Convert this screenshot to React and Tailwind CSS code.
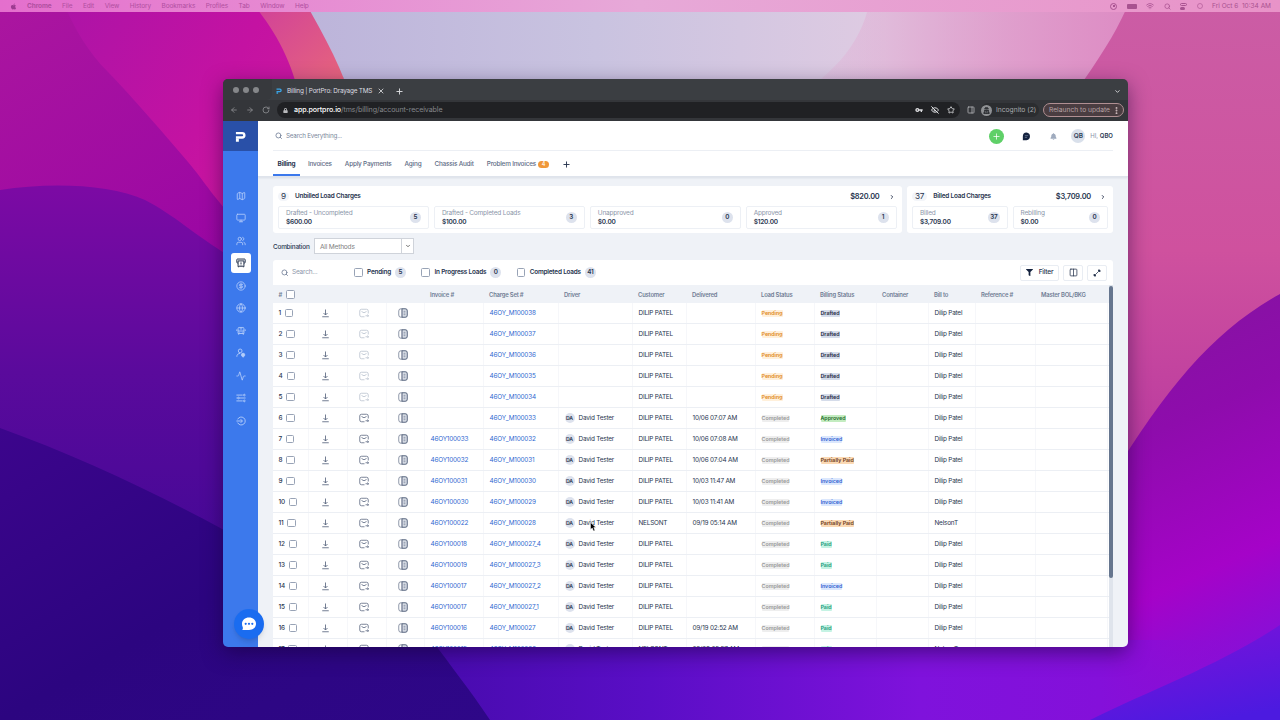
import React from 'react';
import {
    Activity, ArrowLeft, ArrowRight, ChevronDown, ChevronRight, CircleDollarSign, Columns2, EyeOff, Globe,
    Map, Monitor, MoreVertical, PanelRight, Plus, RotateCw, Search, Star, Users, Wifi, X,
} from 'lucide-react';
import { FaApple, FaBell, FaLock, FaUserSecret, FaFilter } from 'react-icons/fa';
import { MdVpnKey } from 'react-icons/md';

const GRID = 'grid grid-cols-[36px_39px_39px_38px_59px_75px_74px_54px_69px_59px_62px_52px_47px_60px_72px]';

const HEADERS = [
    'Invoice #', 'Charge Set #', 'Driver', 'Customer', 'Delivered', 'Load Status', 'Billing Status',
    'Container', 'Bill to', 'Reference #', 'Master BOL/BKG',
];

// [invoice, charge set, customer, delivered, billing status, bill to]
const ROWS = [
    ['', '46OY_M100038', 'DILIP PATEL', '', 'Drafted', 'Dilip Patel'],
    ['', '46OY_M100037', 'DILIP PATEL', '', 'Drafted', 'Dilip Patel'],
    ['', '46OY_M100036', 'DILIP PATEL', '', 'Drafted', 'Dilip Patel'],
    ['', '46OY_M100035', 'DILIP PATEL', '', 'Drafted', 'Dilip Patel'],
    ['', '46OY_M100034', 'DILIP PATEL', '', 'Drafted', 'Dilip Patel'],
    ['', '46OY_M100033', 'DILIP PATEL', '10/06 07:07 AM', 'Approved', 'Dilip Patel'],
    ['46OY100033', '46OY_M100032', 'DILIP PATEL', '10/06 07:08 AM', 'Invoiced', 'Dilip Patel'],
    ['46OY100032', '46OY_M100031', 'DILIP PATEL', '10/06 07:04 AM', 'Partially Paid', 'Dilip Patel'],
    ['46OY100031', '46OY_M100030', 'DILIP PATEL', '10/03 11:47 AM', 'Invoiced', 'Dilip Patel'],
    ['46OY100030', '46OY_M100029', 'DILIP PATEL', '10/03 11:41 AM', 'Invoiced', 'Dilip Patel'],
    ['46OY100022', '46OY_M100028', 'NELSONT', '09/19 05:14 AM', 'Partially Paid', 'NelsonT'],
    ['46OY100018', '46OY_M100027_4', 'DILIP PATEL', '', 'Paid', 'Dilip Patel'],
    ['46OY100019', '46OY_M100027_3', 'DILIP PATEL', '', 'Paid', 'Dilip Patel'],
    ['46OY100017', '46OY_M100027_2', 'DILIP PATEL', '', 'Invoiced', 'Dilip Patel'],
    ['46OY100017', '46OY_M100027_1', 'DILIP PATEL', '', 'Paid', 'Dilip Patel'],
    ['46OY100016', '46OY_M100027', 'DILIP PATEL', '09/19 02:52 AM', 'Paid', 'Dilip Patel'],
    ['46OY100015', '46OY_M100026', 'NELSONT', '09/08 05:57 AM', 'Paid', 'NelsonT'],
];

const STATUS = {
    Drafted: 'bg-[#d5dcea] text-[#1f2a44]',
    Approved: 'bg-[#c3ecc0] text-[#1f6b2c]',
    Invoiced: 'bg-[#dbe7fd] text-[#2f5fd0]',
    'Partially Paid': 'bg-[#fbd9b4] text-[#6b3a1a]',
    Paid: 'bg-[#c5f3e4] text-[#1d9a7c]',
};

const Wallpaper = () => (
    <svg className="absolute inset-0 h-full w-full" viewBox="0 0 1280 720" preserveAspectRatio="none">
        <defs>
            <linearGradient id="magenta" x1="0" y1="0" x2="1" y2="0.5">
                <stop offset="0" stopColor="#a514a8" />
                <stop offset="0.6" stopColor="#c412a2" />
                <stop offset="1" stopColor="#cf1c9c" />
            </linearGradient>
            <linearGradient id="wine" x1="0" y1="0" x2="0.4" y2="1">
                <stop offset="0" stopColor="#ab169f" />
                <stop offset="1" stopColor="#9a06a4" />
            </linearGradient>
            <linearGradient id="coral" x1="0" y1="0" x2="1" y2="1">
                <stop offset="0" stopColor="#cf3f9b" />
                <stop offset="1" stopColor="#ea6a78" />
            </linearGradient>
            <linearGradient id="lavender" x1="0" y1="0" x2="1" y2="0">
                <stop offset="0" stopColor="#bcb4da" />
                <stop offset="0.35" stopColor="#c9c3e0" />
                <stop offset="0.7" stopColor="#dfcbe2" />
                <stop offset="1" stopColor="#df9bcb" />
            </linearGradient>
            <linearGradient id="blush" x1="0" y1="0" x2="1" y2="0">
                <stop offset="0" stopColor="#e4a6d0" stopOpacity="0.1" />
                <stop offset="1" stopColor="#dd8cc4" />
            </linearGradient>
            <linearGradient id="pink" x1="0" y1="0" x2="0" y2="1">
                <stop offset="0" stopColor="#cb5da5" />
                <stop offset="0.5" stopColor="#cf519e" />
                <stop offset="1" stopColor="#b535a0" />
            </linearGradient>
            <linearGradient id="violet" x1="0" y1="0" x2="0" y2="1">
                <stop offset="0" stopColor="#7c0aa4" />
                <stop offset="0.5" stopColor="#5a0a9c" />
                <stop offset="1" stopColor="#440896" />
            </linearGradient>
            <linearGradient id="navy" x1="0" y1="0" x2="1" y2="1">
                <stop offset="0" stopColor="#3c058c" />
                <stop offset="0.5" stopColor="#2c0580" />
                <stop offset="1" stopColor="#2e0788" />
            </linearGradient>
            <linearGradient id="orchid" x1="0" y1="0" x2="0.3" y2="1">
                <stop offset="0" stopColor="#80189a" />
                <stop offset="0.45" stopColor="#8e0cac" />
                <stop offset="0.8" stopColor="#a503c8" />
                <stop offset="1" stopColor="#8a0ed6" />
            </linearGradient>
            <linearGradient id="floor" x1="0" y1="0" x2="1" y2="0">
                <stop offset="0" stopColor="#430aa8" />
                <stop offset="0.3" stopColor="#5a0ec6" />
                <stop offset="0.6" stopColor="#7f12dc" />
                <stop offset="0.8" stopColor="#8410da" />
                <stop offset="1" stopColor="#8e0cd2" stopOpacity="0" />
            </linearGradient>
            <linearGradient id="indigo" x1="0.3" y1="0" x2="0.7" y2="1">
                <stop offset="0" stopColor="#7a12da" />
                <stop offset="1" stopColor="#4c1ae0" />
            </linearGradient>
        </defs>
        <rect width="1280" height="720" fill="#5a0a9c" />
        <path d="M0 0H260C300 30 345 80 360 130V320H0Z" fill="url(#magenta)" />
        <path d="M0 0H62C75 30 88 52 108 72C135 100 165 135 188 162C205 182 215 200 240 225V330H0Z" fill="url(#wine)" />
        <path d="M0 190C50 182 110 184 145 200C175 215 200 240 240 262V560H0Z" fill="url(#violet)" />
        <path d="M250 0H322L350 100H300C292 60 275 30 250 0Z" fill="url(#coral)" />
        <path d="M304 0H1135L1080 110H354C344 70 325 38 304 0Z" fill="url(#lavender)" />
        <path d="M870 0H1135L1080 110H780C830 75 860 50 870 0Z" fill="url(#blush)" />
        <path d="M1130 0H1280V340C1220 380 1160 420 1100 500V80H1084C1105 50 1120 25 1130 0Z" fill="url(#pink)" />
        <path d="M1280 294C1215 330 1168 385 1110 480V600H1000V720H1280Z" fill="url(#orchid)" />
        <path d="M380 640H1280V720H380Z" fill="url(#floor)" />
        <path d="M0 428C75 455 150 490 224 530L300 640H432C450 665 470 690 490 720H0Z" fill="url(#navy)" />
        <path d="M1090 720C1150 690 1220 665 1280 625V720Z" fill="url(#indigo)" />
    </svg>
);

const MenuBar = () => (
    <div className="relative flex h-3 items-center bg-linear-to-r from-[#e46fcd] via-[#e7a9d8] to-[#e893c8] pl-[10px] pr-[9px] text-[6.5px] text-[#b04fa0]">
        <FaApple className="mr-[10px] size-[7px] text-[#9c3b90]" />
        <div className="flex flex-1 items-center gap-[10.5px] tracking-[-0.1px]">
            <span className="font-bold">Chrome</span>
            {['File', 'Edit', 'View', 'History', 'Bookmarks', 'Profiles', 'Tab', 'Window', 'Help'].map((m) => (
                <span key={m}>{m}</span>
            ))}
        </div>
        <div className="flex items-center gap-[9.5px] text-[#a85290]">
            <span className="flex size-[7px] items-center justify-center rounded-full border border-current">
                <span className="size-[2px] bg-current" />
            </span>
            <span className="h-[5px] w-[10px] rounded-[1px] bg-current" />
            <Wifi className="size-2" strokeWidth={2.5} />
            <Search className="size-[7px]" strokeWidth={2.5} />
            <span className="flex w-[7px] flex-col gap-px">
                <span className="h-[3px] rounded-full border border-current" />
                <span className="h-[3px] w-[5px] rounded-full bg-current" />
            </span>
            <span className="size-[6px] rounded-full border border-current opacity-60" />
            <span className="whitespace-nowrap">Fri Oct 6&nbsp; 10:34 AM</span>
        </div>
    </div>
);

const Logo = ({ className }) => (
    <svg className={className} viewBox="0 0 12 12" fill="none" stroke="currentColor" strokeWidth="2.6">
        <path d="M1 2.3H7.8A2.4 2.4 0 0 1 7.8 7.1H1" />
        <path d="M2.6 8.3V11.6" strokeWidth="3.2" />
    </svg>
);

const BrowserChrome = () => (
    <div className="bg-[#3b3e42] text-[#dcdde0]">
        <div className="flex h-[21px] items-center">
            <div className="flex h-full w-[49px] items-center gap-1 rounded-br-md bg-[#37393d] pl-[10px]">
                <span className="size-[6px] rounded-full bg-[#85878a]" />
                <span className="size-[6px] rounded-full bg-[#85878a]" />
                <span className="size-[6px] rounded-full bg-[#85878a]" />
            </div>
            <div className="flex h-full w-[117px] items-center pl-1 pt-[3px]">
                <Logo className="size-[6px] text-[#3aa6e8]" />
                <span className="ml-[5px] w-[87px] whitespace-nowrap text-[6.4px] tracking-[-0.2px]">Billing | PortPro: Drayage TMS</span>
                <X className="ml-[3px] size-2" strokeWidth={2.5} />
            </div>
            <Plus className="ml-[6px] mt-[3px] size-[9px]" strokeWidth={2.5} />
            <ChevronDown className="ml-auto mr-[7px] mt-[3px] size-[7px]" strokeWidth={3} />
        </div>
        <div className="flex h-[21px] items-center bg-[#34363a] pb-px pr-1">
            <div className="flex w-[54px] items-center gap-2 pl-[7px] text-[#8b8d90]">
                <ArrowLeft className="size-2" strokeWidth={2.5} />
                <ArrowRight className="size-2" strokeWidth={2.5} />
                <RotateCw className="size-2" strokeWidth={2.5} />
            </div>
            <div className="flex h-4 w-[683px] items-center rounded-full bg-[#202124] pl-[6px] pr-[5px]">
                <FaLock className="size-[5px] text-[#b9babd]" />
                <span className="ml-[6px] text-[7.1px] tracking-[-0.1px] text-[#85878b]">
                    <span className="font-medium text-white">app.portpro.io</span>/tms/billing/account-receivable
                </span>
                <div className="ml-auto flex items-center gap-2">
                    <MdVpnKey className="size-2" />
                    <EyeOff className="size-2" strokeWidth={3} />
                    <Star className="size-2" strokeWidth={2.5} />
                </div>
            </div>
            <PanelRight className="ml-[7px] size-2 text-[#b0b1b4]" strokeWidth={2.5} />
            <div className="ml-[6px] flex h-[14px] w-[58px] items-center rounded-full bg-[#2b2d30]">
                <span className="flex size-[11px] items-center justify-center rounded-full bg-[#8f9194]">
                    <FaUserSecret className="size-[7px] text-[#303236]" />
                </span>
                <span className="ml-1 whitespace-nowrap text-[6.7px] text-[#a9abae]">Incognito (2)</span>
            </div>
            <div className="ml-auto flex h-[14px] w-[81px] items-center rounded-full border border-[#b08f92] bg-[#4a3d41] pl-[5px]">
                <span className="whitespace-nowrap text-[6.7px] text-[#b6a3a6]">Relaunch to update</span>
                <MoreVertical className="ml-auto mr-[2px] size-[9px] text-[#d3bfc1]" strokeWidth={3} />
            </div>
        </div>
    </div>
);

// Cash slot with a bill coming out, used for the billing section
const BillingIcon = ({ className }) => (
    <svg className={className} viewBox="0 0 24 24" fill="none" stroke="currentColor" strokeWidth="2.4">
        <path d="M5 12H3.5A1.5 1.5 0 0 1 2 10.5V4A1.5 1.5 0 0 1 3.5 2.5H20.5A1.5 1.5 0 0 1 22 4V10.5A1.5 1.5 0 0 1 20.5 12H19" />
        <path d="M5 7H19V21H16.5M5 7V21H7.5M7.5 21a2.2 2.2 0 0 1 4.5 0a2.2 2.2 0 0 1 4.5 0M12 10.5V15.5" />
    </svg>
);

const TruckIcon = ({ className }) => (
    <svg className={className} viewBox="0 0 24 24" fill="none" stroke="currentColor" strokeWidth="2.2">
        <path d="M5 18V6a2.5 2.5 0 0 1 2.5-2.5h9A2.5 2.5 0 0 1 19 6V18ZM5 12H19M2 8V12M22 8V12M6.5 18V21M17.5 18V21M8 15H10M14 15H16M9 7H15" />
    </svg>
);

const UserPinIcon = ({ className }) => (
    <svg className={className} viewBox="0 0 24 24" fill="none" stroke="currentColor" strokeWidth="2.2">
        <circle cx="10" cy="7" r="4.5" />
        <path d="M2 21c0-5 3-8 8-8" />
        <path d="M17 12.5a4 4 0 0 1 4 4c0 3-4 5.5-4 5.5s-4-2.5-4-5.5a4 4 0 0 1 4-4Z" fill="currentColor" />
    </svg>
);

const RulesIcon = ({ className }) => (
    <svg className={className} viewBox="0 0 24 24" fill="none" stroke="currentColor" strokeWidth="2.2">
        <path d="M1 5H16M8 12H23M1 19H16M1 12H4" />
        <circle cx="20" cy="5" r="2" />
        <circle cx="6" cy="12" r="2" />
        <circle cx="20" cy="19" r="2" />
    </svg>
);

const ExitIcon = ({ className }) => (
    <svg className={className} viewBox="0 0 24 24" fill="none" stroke="currentColor" strokeWidth="2.2">
        <path d="M4 8A9.5 9.5 0 1 1 4 16" />
        <path d="M1 12H15M11 7.5L15.5 12L11 16.5" />
    </svg>
);

const NAV = [Map, Monitor, Users, BillingIcon, CircleDollarSign, Globe, TruckIcon, UserPinIcon, Activity, RulesIcon, ExitIcon];

const Sidebar = () => (
    <div className="flex w-[35px] shrink-0 flex-col items-center bg-[#3c79ec]">
        <div className="flex h-[30px] w-full items-center justify-center bg-[#2950a8]">
            <Logo className="mr-px size-[11px] text-white" />
        </div>
        <div className="mt-[33.5px] flex flex-col">
            {NAV.map((Icon, i) => (
                <div key={i} className="flex h-[22.5px] items-center justify-center">
                    {i === 3 ? (
                        <div className="flex size-5 items-center justify-center rounded-[3px] bg-white text-[#27344e]">
                            <Icon className="size-[10px]" />
                        </div>
                    ) : (
                        <Icon className="size-[10px] text-[#b4cdfa]" />
                    )}
                </div>
            ))}
        </div>
    </div>
);

const Header = () => (
    <div className="h-[56px] border-b border-[#dfe4ec] bg-white px-[15px] shadow-[0_1px_2px_rgba(100,116,139,0.15)]">
        <div className="flex h-[30px] items-center border-b border-[#eceff4] pt-px">
            <Search className="ml-[2px] size-[7.5px] text-[#6b7a93]" strokeWidth={2.5} />
            <span className="ml-[3.5px] text-[6.3px] text-[#7b879c]">Search Everything...</span>
            <div className="ml-auto flex items-center">
                <span className="flex size-[15px] items-center justify-center rounded-full bg-[#5fd068] text-white">
                    <Plus className="size-[9px]" />
                </span>
                <svg className="ml-[18px] size-[9px] text-[#15233f]" viewBox="0 0 16 16">
                    <path d="M8 1A7 6.8 0 0 1 8 14.5H1.5V8A7 7 0 0 1 8 1Z" fill="currentColor" />
                    <path d="M5 6.5H11M5 9.5H9" stroke="#8fa0bd" strokeWidth="1" />
                </svg>
                <FaBell className="ml-[19px] size-[7px] text-[#9fabbe]" />
                <span className="ml-[14px] flex size-[14px] items-center justify-center rounded-full bg-[#d9e0eb] pt-px text-[6.5px] font-semibold tracking-normal text-[#2f3d57]">QB</span>
                <span className="ml-[5px] text-[6px] tracking-normal text-[#8793a8]">
                    HI, <span className="font-semibold text-[#27344e]">QBO</span>
                </span>
            </div>
        </div>
        <div className="flex h-[25px] text-[6.4px] font-medium text-[#5d6b84]">
            <div className="flex w-[27px] items-center justify-center border-b-2 border-[#3c79ec] pt-[3px] font-bold text-[#27344e]">Billing</div>
            <div className="ml-2 flex items-center gap-[13px] pt-px">
                <span>Invoices</span>
                <span>Apply Payments</span>
                <span>Aging</span>
                <span>Chassis Audit</span>
                <span className="flex items-center">
                    Problem Invoices
                    <span className="ml-[2px] flex h-[7px] w-[11px] items-center justify-center rounded-full bg-[#f0983a] pt-px text-[5.5px] text-white">4</span>
                </span>
                <Plus className="size-[9px] text-[#27344e]" strokeWidth={2.5} />
            </div>
        </div>
    </div>
);

const CountBadge = ({ children }) => (
    <span className="flex h-[11px] min-w-[11px] items-center justify-center rounded-full bg-[#dde2ed] px-[2px] text-[6.3px] font-semibold text-[#27344e]">{children}</span>
);

const ChargeBox = ({ label, amount, count }) => (
    <div className="flex h-[23px] flex-1 items-center justify-between rounded-[2px] border border-[#edf0f5] px-[7px]">
        <div className="pt-px text-[6.5px] leading-[9.4px]">
            <div className="text-[#8b96a9]">{label}</div>
            <div className="font-semibold text-[#27344e]">{amount}</div>
        </div>
        <CountBadge>{count}</CountBadge>
    </div>
);

const ChargeCard = ({ className, count, title, total, children }) => (
    <div className={`h-[47px] rounded-[3px] bg-white px-[5px] ${className}`}>
        <div className="flex h-5 items-center pt-px text-[#27344e]">
            <span className="min-w-[11px] rounded-full bg-[#f3f5f9] px-[3px] text-[8.2px]">{count}</span>
            <span className="ml-[6px] text-[6.4px] font-semibold">{title}</span>
            <span className="ml-auto text-[7.4px] font-semibold">{total}</span>
            <ChevronRight className="ml-[9px] mr-[2px] size-[6px]" strokeWidth={3.5} />
        </div>
        <div className="flex gap-[5px]">{children}</div>
    </div>
);

const Checkbox = () => <span className="size-[8.5px] shrink-0 rounded-[1.5px] border border-[#98a3b6] bg-white" />;

const DownloadIcon = () => (
    <svg className="size-[9px] text-[#5a6780]" viewBox="0 0 18 18" fill="none" stroke="currentColor" strokeWidth="1.7">
        <path d="M9 1V12M5 8L9 12L13 8M2.5 15.5H15.5" />
    </svg>
);

const MailIcon = ({ muted }) => (
    <svg className={`size-[10px] ${muted ? 'text-[#b9c1ce]' : 'text-[#5a6780]'}`} viewBox="0 0 20 20" fill="none" stroke="currentColor" strokeWidth="1.6">
        <path d="M11 17.5H5A3.5 3.5 0 0 1 1.5 14V6A3.5 3.5 0 0 1 5 2.5H15A3.5 3.5 0 0 1 18.5 6V11" />
        <path d="M5 7Q10 12 15 7M13 15.5H19M17 13L19 15.5L17 18" />
    </svg>
);

const DetailsIcon = () => (
    <svg className="size-[10px] text-[#5f6c84]" viewBox="0 0 20 20" fill="none" stroke="currentColor" strokeWidth="1.4">
        <path d="M8 1.5H15A3.5 3.5 0 0 1 18.5 5V15A3.5 3.5 0 0 1 15 18.5H8Z" fill="#e3e7ee" />
        <rect x="1.5" y="1.5" width="17" height="17" rx="4.5" />
        <path d="M8 1.5V18.5M11 6.5H15M11 10H15M11 13.5H15" />
    </svg>
);

const Toolbar = () => (
    <div className="flex h-[25px] items-center rounded-t-[3px] bg-white px-2">
        <Search className="size-[7.5px] text-[#6b7a93]" strokeWidth={2.5} />
        <span className="ml-[3.5px] w-[62px] text-[6.5px] text-[#8b96a9]">Search...</span>
        <div className="flex items-center gap-[15.5px]">
            {[['Pending', 5], ['In Progress Loads', 0], ['Completed Loads', 41]].map(([label, n]) => (
                <div key={label} className="flex items-center">
                    <Checkbox />
                    <span className="ml-[4.5px] whitespace-nowrap text-[6.4px] font-semibold text-[#27344e]">{label}</span>
                    <span className="ml-1"><CountBadge>{n}</CountBadge></span>
                </div>
            ))}
        </div>
        <div className="-mr-[2px] ml-auto flex items-center gap-1 text-[#27344e]">
            <div className="flex h-4 w-[39px] items-center justify-center gap-[6px] rounded-[2px] border border-[#e9edf3]">
                <FaFilter className="size-[7px] text-[#15233f]" />
                <span className="text-[6.6px] font-medium">Filter</span>
            </div>
            <div className="flex h-4 w-5 items-center justify-center rounded-[2px] border border-[#e9edf3]">
                <Columns2 className="size-[9px]" />
            </div>
            <div className="flex h-4 w-5 items-center justify-center rounded-[2px] border border-[#e9edf3]">
                <svg className="size-2" viewBox="0 0 16 16" fill="currentColor" stroke="currentColor" strokeWidth="1.5">
                    <path d="M3 13L13 3" />
                    <path d="M10 2H14V6ZM2 10V14H6Z" />
                </svg>
            </div>
        </div>
    </div>
);

const Row = ({ row, index }) => {
    const [invoice, chargeSet, customer, delivered, status, billTo] = row;
    const pending = status === 'Drafted';
    const cell = 'flex items-center whitespace-nowrap border-r border-[#f6f7fa] pl-[5.5px]';
    return (
        <div className={`${GRID} h-[21px] border-b border-[#eceff4] bg-white text-[6.4px] text-[#27344e]`}>
            <div className={`${cell} gap-1 font-medium`}>
                {index + 1}
                <Checkbox />
            </div>
            <div className="flex items-center border-r border-[#f6f7fa] pl-3"><DownloadIcon /></div>
            <div className="flex items-center border-r border-[#f6f7fa] pl-[11px]"><MailIcon muted={pending} /></div>
            <div className="flex items-center border-r border-[#f6f7fa] pl-[10.5px]"><DetailsIcon /></div>
            <div className={`${cell} text-[#2f68d0]`}>{invoice}</div>
            <div className={`${cell} text-[#2f68d0]`}>{chargeSet}</div>
            <div className={cell}>
                {!pending && (
                    <>
                        <span className="flex size-[10px] items-center justify-center rounded-full bg-[#dde2ed] pt-px text-[5.2px] font-semibold">DA</span>
                        <span className="ml-1">David Tester</span>
                    </>
                )}
            </div>
            <div className={cell}>{customer}</div>
            <div className={cell}>{delivered}</div>
            <div className={cell}>
                <span className={`rounded-[1px] text-[5.3px] font-semibold leading-[7px] tracking-normal ${pending ? 'bg-[#fff0db] text-[#e08a1e]' : 'bg-[#eeeeee] text-[#9a9a9a]'}`}>
                    {pending ? 'Pending' : 'Completed'}
                </span>
            </div>
            <div className={cell}>
                <span className={`rounded-[1px] text-[5.3px] font-semibold leading-[7px] tracking-normal ${STATUS[status]}`}>{status}</span>
            </div>
            <div className={cell} />
            <div className={cell}>{billTo}</div>
            <div className={cell} />
            <div className={cell} />
        </div>
    );
};

const LoadTable = () => (
    <div className="mt-[6px]">
        <Toolbar />
        <div className="flex">
            <div className="w-[836px] shrink-0">
                <div className={`${GRID} h-[18px] items-center pt-px text-[5.9px] font-semibold text-[#6f7d95]`}>
                    <div className="flex items-center gap-1 pl-[5.5px]"># <Checkbox /></div>
                    <div />
                    <div />
                    <div />
                    {HEADERS.map((h) => (
                        <div key={h} className="whitespace-nowrap pl-[5px]">{h}</div>
                    ))}
                </div>
                {ROWS.map((row, i) => <Row key={i} row={row} index={i} />)}
            </div>
            <div className="w-1 bg-[#dfe4ec]">
                <div className="mt-px h-[292px] rounded-full bg-[#66768f]" />
            </div>
        </div>
    </div>
);

const BillingPage = () => (
    <div className="min-w-0 flex-1 bg-[#eff2f7] tracking-[-0.2px]">
        <Header />
        <div className="px-[15px] pt-[9px]">
            <div className="flex justify-between">
                <ChargeCard className="w-[628.5px]" count="9" title="Unbilled Load Charges" total="$820.00">
                    <ChargeBox label="Drafted - Uncompleted" amount="$600.00" count={5} />
                    <ChargeBox label="Drafted - Completed Loads" amount="$100.00" count={3} />
                    <ChargeBox label="Unapproved" amount="$0.00" count={0} />
                    <ChargeBox label="Approved" amount="$120.00" count={1} />
                </ChargeCard>
                <ChargeCard className="w-[206px]" count="37" title="Billed Load Charges" total="$3,709.00">
                    <ChargeBox label="Billed" amount="$3,709.00" count={37} />
                    <ChargeBox label="Rebilling" amount="$0.00" count={0} />
                </ChargeCard>
            </div>
            <div className="mt-[5px] flex items-center">
                <span className="w-[41px] pt-[2px] text-[6.4px] font-medium text-[#27344e]">Combination</span>
                <div className="flex h-4 w-[100px] items-center border border-[#cfd3da] bg-white">
                    <span className="flex-1 pl-[5px] pt-[2px] text-[6.6px] text-[#808080]">All Methods</span>
                    <span className="flex h-full w-3 items-center justify-center border-l border-[#cfd3da]">
                        <ChevronDown className="size-[6px] text-[#444444]" strokeWidth={3} />
                    </span>
                </div>
            </div>
            <LoadTable />
        </div>
    </div>
);

const App = () => (
    <div className="relative h-[720px] w-[1280px] overflow-hidden font-['Inter',sans-serif] leading-none">
        <Wallpaper />
        <MenuBar />
        <div className="absolute left-[223px] top-[79px] flex h-[568px] w-[905px] flex-col overflow-hidden rounded-[5px] shadow-[0_6px_20px_rgba(20,0,50,0.5)]">
            <BrowserChrome />
            <div className="flex min-h-0 flex-1">
                <Sidebar />
                <BillingPage />
            </div>
        </div>
        {/* chat launcher, overlaps the sidebar edge */}
        <div className="absolute left-[234px] top-[609px] flex size-[30px] items-center justify-center rounded-full bg-[#1a6cf0] shadow-md">
            <svg className="size-4" viewBox="0 0 16 16">
                <path d="M8 1.5C12 1.5 15 4 15 7.8S12 14 8 14H1.2C2 13 2 12 1.7 11C1.2 10 1 9 1 7.8C1 4 4 1.5 8 1.5Z" fill="#fff" />
                <g fill="#1a6cf0">
                    <circle cx="4.7" cy="7.8" r="1.1" />
                    <circle cx="8" cy="7.8" r="1.1" />
                    <circle cx="11.3" cy="7.8" r="1.1" />
                </g>
            </svg>
        </div>
        {/* mouse pointer */}
        <svg className="absolute left-[590px] top-[522px] h-[10px] w-[7px]" viewBox="0 0 14 20">
            <path d="M1 1V15L4.5 12L7 18L10 17L7.5 11H12Z" fill="#000" stroke="#fff" strokeWidth="1" />
        </svg>
    </div>
);

export default App;
